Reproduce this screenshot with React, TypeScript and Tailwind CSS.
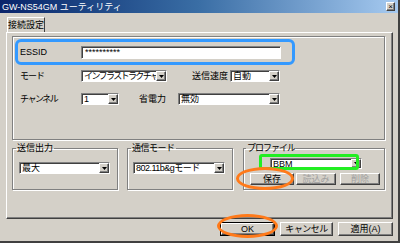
import React from "react";

const sunken =
  "border border-t-[#808080] border-l-[#808080] border-r-white border-b-white shadow-[inset_1px_1px_0_#404040]";
const raised =
  "bg-[#d4d0c8] border border-t-white border-l-white border-r-[#404040] border-b-[#404040] shadow-[inset_-1px_-1px_0_#808080]";
const etched = "border border-[#808080] shadow-[inset_1px_1px_0_#fff,1px_1px_0_#fff]";

const Arrow = () => (
  <svg width="5" height="3" viewBox="0 0 5 3">
    <path d="M0 0h5L2.5 3z" fill="#000" />
  </svg>
);

const Select = ({
  className,
  text,
  textClass = "",
}: {
  className: string;
  text: string;
  textClass?: string;
}) => (
  <div className={`flex bg-white ${sunken} ${className}`}>
    <span
      className={`flex-1 overflow-hidden whitespace-nowrap pl-[2px] text-[9px] leading-[10px] ${textClass}`}
    >
      {text}
    </span>
    <span className={`flex w-[10px] items-center justify-center ${raised}`}>
      <Arrow />
    </span>
  </div>
);

const Button = ({
  className,
  text,
  disabled = false,
}: {
  className: string;
  text: string;
  disabled?: boolean;
}) => (
  <div
    className={`flex items-center justify-center text-[9px] leading-[10px] ${raised} ${className} ${
      disabled ? "text-[#a0a0a0]" : "text-black"
    }`}
  >
    {text}
  </div>
);

const App = () => {
  return (
    <div
      className="relative h-[243px] w-[400px] overflow-hidden border-r-2 border-b-2 border-r-[#404040] border-b-[#404040] bg-[#d4d0c8] text-black"
      style={{ fontFamily: "'Liberation Sans', 'Noto Sans CJK JP', sans-serif" }}
    >
      {/* title bar */}
      <div className="flex h-[13px] items-center justify-between bg-linear-to-r from-[#0a246a] via-[#3a6ea5] to-[#a6caf0] pl-[2px] pr-[3px]">
        <span className="text-[9px] leading-[10px] text-white">GW-NS54GM ユーティリティ</span>
        <span className={`flex h-[9px] w-[9px] items-center justify-center text-[8px] leading-none ${raised}`}>
          ×
        </span>
      </div>

      <div className="pl-[6px] pt-[4px]">
        {/* tab */}
        <div className="ml-[1px] flex h-[15px] w-[38px] items-center justify-center border-t border-l border-r border-t-white border-l-white border-r-[#404040] text-[9px] leading-[10px]">
          接続設定
        </div>

        {/* panel */}
        <div className="h-[187px] w-[387px] border border-t-white border-l-white border-r-[#404040] border-b-[#404040] pl-[5px] pt-[3px] shadow-[inset_-1px_-1px_0_#808080]">
          <div className={`flex h-[104px] w-[373px] flex-col ${etched}`}>
            <div className="ml-[2px] mt-[2px] flex h-[26px] w-[280px] items-center rounded-[6px] border-[3px] border-[#3399ff] pl-[2px]">
              <span className="w-[61px] text-[9px] leading-[10px]">ESSID</span>
              <div className={`flex h-[13px] w-[200px] items-center bg-white pl-[3px] text-[9px] leading-[10px] ${sunken}`}>
                **********
              </div>
            </div>

            <div className="ml-[7px] mt-[5px] flex h-[12px] items-center">
              <span className="w-[61px] text-[9px] leading-[10px] tracking-[-1px]">モード</span>
              <Select
                className="h-[12px] w-[86px]"
                text="インフラストラクチャ"
                textClass="text-[8px] tracking-[-1.6px]"
              />
              <span className="ml-[25px] w-[38px] text-[9px] leading-[10px]">送信速度</span>
              <Select className="h-[12px] w-[50px]" text="自動" />
            </div>

            <div className="ml-[7px] mt-[11px] flex h-[12px] items-center">
              <span className="w-[61px] text-[9px] leading-[10px] tracking-[-1.5px]">チャンネル</span>
              <Select className="h-[12px] w-[38px]" text="1" />
              <span className="ml-[20px] w-[39px] text-[9px] leading-[10px]">省電力</span>
              <Select className="h-[12px] w-[102px]" text="無効" />
            </div>
          </div>

          <div className="mt-[3px] flex">
            <fieldset className={`h-[47px] w-[106px] ${etched}`}>
              <legend className="ml-[3px] px-[1px] text-[9px] leading-[10px]">送信出力</legend>
              <Select className="ml-[6px] mt-[9px] h-[12px] w-[91px]" text="最大" />
            </fieldset>
            <fieldset className={`ml-[9px] h-[47px] w-[106px] ${etched}`}>
              <legend className="ml-[3px] px-[1px] text-[9px] leading-[10px] tracking-[-0.5px]">通信モード</legend>
              <Select
                className="ml-[5px] mt-[9px] h-[12px] w-[92px]"
                text="802.11b&gモード"
                textClass="tracking-[-0.5px]"
              />
            </fieldset>
            <fieldset className={`ml-[10px] h-[47px] w-[142px] ${etched}`}>
              <legend className="ml-[2px] px-[1px] text-[9px] leading-[10px] tracking-[-1px]">プロファイル</legend>
              <Select className="ml-[26px] mt-[5px] h-[11px] w-[92px]" text="BBM" />
              <div className="mt-[4px] flex">
                <Button className="ml-[6px] h-[12px] w-[44px]" text="保存" />
                <Button className="ml-[2px] h-[12px] w-[40px]" text="読込み" disabled />
                <Button className="ml-[4px] h-[12px] w-[40px]" text="削除" disabled />
              </div>
            </fieldset>
          </div>
        </div>

        {/* dialog buttons */}
        <div className="mt-[3px] flex w-[387px] justify-end gap-[5px]">
          <div className="border border-black">
            <Button className="h-[12px] w-[53px]" text="OK" />
          </div>
          <Button className="h-[14px] w-[53px] tracking-[-0.5px]" text="キャンセル" />
          <Button className="h-[14px] w-[55px]" text="適用(A)" />
        </div>
      </div>

      {/* annotations */}
      <div className="absolute left-[259px] top-[154px] h-[16px] w-[100px] rounded-[3px] border-[3px] border-[#22ee22]" />
      <div className="absolute left-[236px] top-[167px] h-[23px] w-[58px] rounded-[50%] border-[3px] border-[#ff7a1a]" />
      <div className="absolute left-[217px] top-[214px] h-[24px] w-[61px] rounded-[50%] border-[3px] border-[#ff7a1a]" />
    </div>
  );
};

export default App;
